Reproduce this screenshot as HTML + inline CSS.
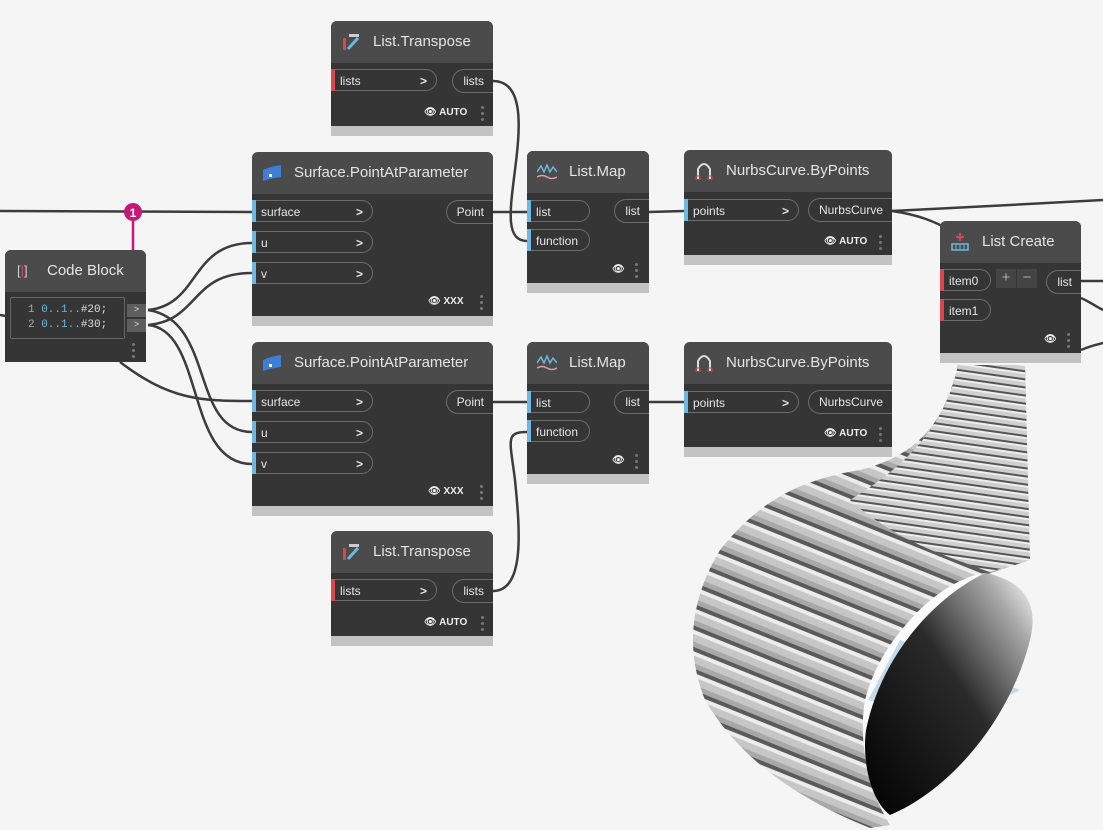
<!DOCTYPE html>
<html><head><meta charset="utf-8"><style>
body{margin:0;width:1103px;height:830px;background:#f5f5f5;position:relative;overflow:hidden;font-family:"Liberation Sans",sans-serif}
.n{position:absolute;background:#353535;border-radius:6px 6px 0 0;overflow:hidden}
.h{height:42px;background:#4b4b4b;color:#e4e4e4;font-size:15px;line-height:42px;padding-left:42px;position:relative;white-space:nowrap}
.st{position:absolute;left:0;right:0;bottom:0;height:10px;background:#c3c3c3}
.ip{position:absolute;left:0;height:22px;border:1px solid #6d6d6d;border-left:none;border-radius:0 12px 12px 0;color:#e6e6e6;font-size:12px;line-height:22px;padding-left:9px;box-sizing:border-box}
.ip:before{content:"";position:absolute;left:0;top:-1px;bottom:-1px;width:4px;background:#6cb8e0}
.ip.r:before{background:#d9484e}
.ip b{position:absolute;right:9px;top:0}
.op{position:absolute;right:0;height:24px;border:1px solid #6d6d6d;border-right:none;border-radius:12px 0 0 12px;color:#e6e6e6;font-size:12px;line-height:22px;padding:0 9px 0 10px;box-sizing:border-box}
.ft{position:absolute;color:#eee;font-size:10px;font-weight:bold}
.dots{position:absolute;width:3px;}
.dots i{display:block;width:3px;height:3px;background:#777;border-radius:50%;margin-bottom:3px}
.ic{position:absolute;left:10px;top:12px;width:20px;height:18px}
</style></head><body>
<svg width="1103" height="830" style="position:absolute;left:0;top:0">
<defs>
<pattern id="str" width="20" height="20" patternUnits="userSpaceOnUse" patternTransform="rotate(22)">
<rect width="20" height="20" fill="#c6c6c6"/><rect width="20" height="4" fill="#5a5a5a"/><rect y="4" width="20" height="4" fill="#ececec"/><rect y="15" width="20" height="5" fill="#a8a8a8"/></pattern>
<pattern id="str2" width="8" height="8" patternUnits="userSpaceOnUse" patternTransform="rotate(8)">
<rect width="8" height="8" fill="#cfcfcf"/><rect width="8" height="2" fill="#555"/><rect y="2" width="8" height="2" fill="#eee"/></pattern>
<linearGradient id="sh" x1="0" y1="1" x2="1" y2="0"><stop offset="0" stop-color="#000"/><stop offset="0.55" stop-color="#2a2a2a"/><stop offset="0.85" stop-color="#aaa"/><stop offset="1" stop-color="#fff"/></linearGradient>
</defs>
<g stroke="#3c3c3c" stroke-width="2.5" fill="none">
<path d="M0 211 L252 212"/>
<path d="M0 315 L6 316"/>
<path d="M120 362 C170 400,200 401,252 401"/>
<path d="M148 310 C200 305,190 243,252 243"/>
<path d="M148 325 C200 320,190 273,252 273"/>
<path d="M148 310 C215 320,190 432,252 432"/>
<path d="M148 325 C205 330,185 464,252 464"/>
<path d="M493 81 C525 81,520 130,515 170 C510 210,505 241,527 241"/>
<path d="M493 212 L527 212"/>
<path d="M493 402 L527 402"/>
<path d="M493 591 C525 591,520 530,515 480 C510 440,505 432,527 432"/>
<path d="M649 212 L684 211"/>
<path d="M649 402 L684 402"/>
<path d="M892 211 C960 208,1040 203,1103 200"/>
<path d="M892 211 C920 215,935 222,950 230"/>
<path d="M1081 281 L1103 281"/>
<path d="M1081 298 C1090 302,1095 306,1103 310"/>
<path d="M1081 350 C1090 346,1095 345,1103 343"/>
</g>
<g>
<path d="M958 365 L1025 365 L1030 560 L985 575 C930 590,880 640,865 700 C860 730,862 780,890 825 L870 828 C800 800,740 760,705 700 C685 650,690 600,720 550 C760 500,800 480,860 470 C920 455,945 420,958 365 Z" fill="url(#str)"/>
<path d="M958 365 L1025 365 L1030 560 L990 572 C960 560,900 545,850 500 C900 470,945 430,958 365 Z" fill="url(#str2)"/>
<path d="M985 573 C940 580,890 630,868 690 C862 710,862 730,866 745 C900 700,960 640,985 573 Z" fill="#fbfbfb"/>
<path d="M868 700 L900 640 L1020 690 L960 720 Z" fill="#b9d3e8" opacity="0.85"/>
<path d="M985 573 C1020 580,1040 600,1030 640 C1010 720,950 790,890 815 C870 800,862 760,866 730 C880 660,930 600,985 573 Z" fill="url(#sh)"/>
</g>
<circle cx="133" cy="212" r="9" fill="#c8177a"/>
<text x="133" y="217" font-size="12" font-weight="bold" fill="#fff" text-anchor="middle" font-family="Liberation Sans">1</text>
<line x1="133" y1="221" x2="133" y2="268" stroke="#c8177a" stroke-width="2.5"/>
</svg>

<div class="n" style="left:331px;top:21px;width:162px;height:115px">
<div class="h">List.Transpose<svg class="ic" viewBox="0 0 20 18"><rect x="2" y="5" width="3" height="12" fill="#d9484e"/><path d="M7 16 L17 5" stroke="#6cb8e0" stroke-width="3"/><rect x="8" y="1" width="10" height="3" fill="#ccc"/></svg></div>
<div class="ip r" style="top:48px;width:106px">lists<b>&gt;</b></div>
<div class="op" style="top:48px">lists</div>
<div class="ft" style="left:93px;top:86px">👁&#xFE0E; AUTO</div>
<div class="dots" style="left:150px;top:85px"><i></i><i></i><i></i></div>
<div class="st"></div></div>

<div class="n" style="left:5px;top:250px;width:141px;height:112px">
<div class="h" style="padding-left:42px">Code Block<span style="position:absolute;left:12px;top:0;font-size:13px;color:#ccc">[<span style="color:#d9484e">|</span>]</span></div>
<div style="position:absolute;left:5px;top:47px;width:115px;height:42px;border:1px solid #666;border-radius:2px;font-family:'Liberation Mono',monospace;font-size:11px;line-height:15px;padding-top:5px;box-sizing:border-box">
<div style="padding-left:17px;color:#aaa">1 <span style="color:#6cb8e0">0..1..</span><span style="color:#ddd">#20;</span></div>
<div style="padding-left:17px;color:#aaa">2 <span style="color:#6cb8e0">0..1..</span><span style="color:#ddd">#30;</span></div></div>
<div style="position:absolute;left:122px;top:54px;width:19px;height:13px;background:#5e5e5e;color:#ddd;font-size:9px;text-align:center">&gt;</div>
<div style="position:absolute;left:122px;top:69px;width:19px;height:13px;background:#5e5e5e;color:#ddd;font-size:9px;text-align:center">&gt;</div>
<div class="dots" style="left:127px;top:93px"><i></i><i></i><i></i></div>
</div>

<div class="n" style="left:252px;top:152px;width:241px;height:174px">
<div class="h">Surface.PointAtParameter<svg class="ic" viewBox="0 0 20 18"><path d="M1 6 Q10 2 19 1 L19 13 Q10 14 1 17 Z" fill="#3d7fd6"/><rect x="7" y="10" width="3" height="3" fill="#fff"/></svg></div>
<div class="ip" style="top:48px;width:121px">surface<b>&gt;</b></div>
<div class="ip" style="top:79px;width:121px">u<b>&gt;</b></div>
<div class="ip" style="top:110px;width:121px">v<b>&gt;</b></div>
<div class="op" style="top:48px">Point</div>
<div class="ft" style="left:176px;top:144px">👁&#xFE0E; XXX</div>
<div class="dots" style="left:228px;top:143px"><i></i><i></i><i></i></div>
<div class="st"></div></div>

<div class="n" style="left:252px;top:342px;width:241px;height:174px">
<div class="h">Surface.PointAtParameter<svg class="ic" viewBox="0 0 20 18"><path d="M1 6 Q10 2 19 1 L19 13 Q10 14 1 17 Z" fill="#3d7fd6"/><rect x="7" y="10" width="3" height="3" fill="#fff"/></svg></div>
<div class="ip" style="top:48px;width:121px">surface<b>&gt;</b></div>
<div class="ip" style="top:79px;width:121px">u<b>&gt;</b></div>
<div class="ip" style="top:110px;width:121px">v<b>&gt;</b></div>
<div class="op" style="top:48px">Point</div>
<div class="ft" style="left:176px;top:144px">👁&#xFE0E; XXX</div>
<div class="dots" style="left:228px;top:143px"><i></i><i></i><i></i></div>
<div class="st"></div></div>

<div class="n" style="left:331px;top:531px;width:162px;height:115px">
<div class="h">List.Transpose<svg class="ic" viewBox="0 0 20 18"><rect x="2" y="5" width="3" height="12" fill="#d9484e"/><path d="M7 16 L17 5" stroke="#6cb8e0" stroke-width="3"/><rect x="8" y="1" width="10" height="3" fill="#ccc"/></svg></div>
<div class="ip r" style="top:48px;width:106px">lists<b>&gt;</b></div>
<div class="op" style="top:48px">lists</div>
<div class="ft" style="left:93px;top:86px">👁&#xFE0E; AUTO</div>
<div class="dots" style="left:150px;top:85px"><i></i><i></i><i></i></div>
<div class="st"></div></div>

<div class="n" style="left:527px;top:151px;width:122px;height:142px">
<div class="h">List.Map<svg class="ic" viewBox="0 0 20 18"><path d="M0 9 L4 3 L7 9 L10 2 L13 9 L16 4 L20 9" stroke="#6cb8e0" stroke-width="1.5" fill="none"/><path d="M0 14 Q5 11 10 14 T20 14" stroke="#d9a0a0" stroke-width="1.5" fill="none"/></svg></div>
<div class="ip" style="top:49px;width:63px">list</div>
<div class="ip" style="top:78px;width:63px">function</div>
<div class="op" style="top:48px">list</div>
<div class="ft" style="left:85px;top:113px">👁&#xFE0E;</div>
<div class="dots" style="left:108px;top:112px"><i></i><i></i><i></i></div>
<div class="st"></div></div>

<div class="n" style="left:527px;top:342px;width:122px;height:142px">
<div class="h">List.Map<svg class="ic" viewBox="0 0 20 18"><path d="M0 9 L4 3 L7 9 L10 2 L13 9 L16 4 L20 9" stroke="#6cb8e0" stroke-width="1.5" fill="none"/><path d="M0 14 Q5 11 10 14 T20 14" stroke="#d9a0a0" stroke-width="1.5" fill="none"/></svg></div>
<div class="ip" style="top:49px;width:63px">list</div>
<div class="ip" style="top:78px;width:63px">function</div>
<div class="op" style="top:48px">list</div>
<div class="ft" style="left:85px;top:113px">👁&#xFE0E;</div>
<div class="dots" style="left:108px;top:112px"><i></i><i></i><i></i></div>
<div class="st"></div></div>

<div class="n" style="left:684px;top:150px;width:208px;height:115px">
<div class="h">NurbsCurve.ByPoints<svg class="ic" viewBox="0 0 20 18"><path d="M4 17 L4 7 Q10 -3 16 7 L16 17" stroke="#ddd" stroke-width="2" fill="none"/><rect x="2" y="14" width="4" height="4" fill="none" stroke="#c44"/><rect x="14" y="14" width="4" height="4" fill="none" stroke="#c44"/></svg></div>
<div class="ip" style="top:49px;width:115px">points<b>&gt;</b></div>
<div class="op" style="top:48px">NurbsCurve</div>
<div class="ft" style="left:140px;top:86px">👁&#xFE0E; AUTO</div>
<div class="dots" style="left:195px;top:85px"><i></i><i></i><i></i></div>
<div class="st"></div></div>

<div class="n" style="left:684px;top:342px;width:208px;height:115px">
<div class="h">NurbsCurve.ByPoints<svg class="ic" viewBox="0 0 20 18"><path d="M4 17 L4 7 Q10 -3 16 7 L16 17" stroke="#ddd" stroke-width="2" fill="none"/><rect x="2" y="14" width="4" height="4" fill="none" stroke="#c44"/><rect x="14" y="14" width="4" height="4" fill="none" stroke="#c44"/></svg></div>
<div class="ip" style="top:49px;width:115px">points<b>&gt;</b></div>
<div class="op" style="top:48px">NurbsCurve</div>
<div class="ft" style="left:140px;top:86px">👁&#xFE0E; AUTO</div>
<div class="dots" style="left:195px;top:85px"><i></i><i></i><i></i></div>
<div class="st"></div></div>

<div class="n" style="left:940px;top:221px;width:141px;height:142px">
<div class="h">List Create<svg class="ic" viewBox="0 0 20 18"><path d="M10 0 L10 8 M6 4 L14 4" stroke="#d9484e" stroke-width="2"/><rect x="2" y="11" width="16" height="6" fill="none" stroke="#6cb8e0" stroke-width="1.5"/><path d="M6 11V17M10 11V17M14 11V17" stroke="#6cb8e0"/></svg></div>
<div class="ip r" style="top:48px;width:51px">item0</div>
<div class="ip r" style="top:78px;width:51px">item1</div>
<div style="position:absolute;left:56px;top:48px;width:20px;height:19px;background:#444;color:#aaa;text-align:center;font-size:15px;line-height:18px">+</div>
<div style="position:absolute;left:77px;top:48px;width:20px;height:19px;background:#444;color:#aaa;text-align:center;font-size:15px;line-height:18px">−</div>
<div class="op" style="top:49px">list</div>
<div class="ft" style="left:104px;top:113px">👁&#xFE0E;</div>
<div class="dots" style="left:127px;top:112px"><i></i><i></i><i></i></div>
<div class="st"></div></div>
</body></html>
